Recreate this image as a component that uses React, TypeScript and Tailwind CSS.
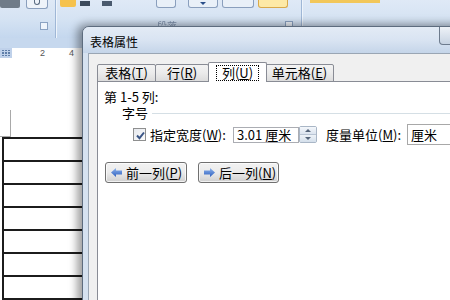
import type { ReactNode } from 'react'

function Accel({ label, k }: { label: string; k: string }) {
  return (
    <>
      {label}(<span className="underline underline-offset-[1px]">{k}</span>)
    </>
  )
}

function Tab({ children, width, active }: { children: ReactNode; width: string; active?: boolean }) {
  if (active) {
    return (
      <div
        className={`${width} h-[20px] -mx-px flex items-center justify-center border-x border-t border-[#898c95] bg-white rounded-t-[2px] relative z-20`}
      >
        <span className="border border-dotted border-black px-[5px] leading-[12px] py-px">{children}</span>
      </div>
    )
  }
  return (
    <div
      className={`${width} h-[18px] flex items-center justify-center border-x border-t border-b border-[#898c95] bg-gradient-to-b from-[#f3f3f3] via-[#ebebeb] to-[#dcdcdc] rounded-t-[2px] -ml-px first:ml-0`}
    >
      <span className="leading-[14px]">{children}</span>
    </div>
  )
}

function Arrow({ dir }: { dir: 'left' | 'right' }) {
  return (
    <svg width="11" height="9" viewBox="0 0 11 9" className={dir === 'right' ? 'scale-x-[-1]' : ''}>
      <defs>
        <linearGradient id={`ag-${dir}`} x1="0" y1="0" x2="0" y2="1">
          <stop offset="0" stopColor="#8fb4ec" />
          <stop offset="1" stopColor="#2d5fbf" />
        </linearGradient>
      </defs>
      <polygon points="0,4.5 5,0 5,2.5 11,2.5 11,6.5 5,6.5 5,9" fill={`url(#ag-${dir})`} />
    </svg>
  )
}

function VButton({ children, icon, width }: { children: ReactNode; icon: 'left' | 'right'; width: string }) {
  return (
    <div
      className={`${width} h-[21px] flex items-center gap-[4px] pl-[5px] rounded-[3px] border border-[#707070] bg-gradient-to-b from-[#f2f2f2] via-[#ebebeb] to-[#cfcfcf] shadow-[inset_0_0_0_1px_rgba(255,255,255,0.7)]`}
    >
      <Arrow dir={icon} />
      <span className="leading-[14px]">{children}</span>
    </div>
  )
}

export default function App() {
  return (
    <div className="relative w-[450px] h-[300px] overflow-hidden bg-white text-[13px] text-black font-['Noto_Sans_CJK_SC','Noto_Sans',sans-serif]">
      {/* ribbon */}
      <div className="h-[48px] flex flex-col bg-[#c6d8ee]">
        <div className="h-[38px] flex bg-gradient-to-b from-[#dfe9f6] via-[#d5e3f3] to-[#c4d7ee]">
          <div className="w-[56px] flex flex-col border-r border-[#9fb7d6]">
            <div className="h-[9px] flex gap-[6px]">
              <div className="w-[20px] h-[8px] bg-[#6f7b88] rounded-b-[2px]" />
              <div className="w-[22px] h-[9px] border-x border-b border-[#8a9fbd] rounded-b-[3px] bg-[#eef3f9] flex justify-center">
                <div className="w-[6px] h-[5px] border border-[#5a6b80] rounded-b-full border-t-0" />
              </div>
            </div>
            <div className="flex-1 flex items-start justify-end pt-[13px] pr-[7px]">
              <div className="w-[8px] h-[8px] border border-[#8aa2c2] bg-[#eef4fb]" />
            </div>
          </div>
          <div className="w-[246px] flex flex-col border-l border-r border-l-[#eef4fb] border-r-[#9fb7d6]">
            <div className="h-[9px] flex gap-[4px] pl-[3px]">
              <div className="w-[16px] h-[7px] bg-[#f5c24d] rounded-b-[2px]" />
              <div className="w-[10px] h-[5px] bg-[#3b4a5c] mt-[1px]" />
              <div className="w-[10px] h-[5px] bg-[#4a5a6e] mt-[1px] ml-[8px]" />
              <div className="w-[20px] h-[8px] border-x border-b border-[#8a9fbd] rounded-b-[3px] bg-[#e9f0f8] ml-[40px]" />
              <div className="w-[30px] h-[8px] border-x border-b border-[#8a9fbd] rounded-b-[3px] bg-[#e9f0f8] ml-[8px] flex justify-center items-center">
                <div className="w-0 h-0 border-x-[3px] border-x-transparent border-t-[3px] border-t-[#2a4f8a]" />
              </div>
              <div className="w-[32px] h-[8px] border-x border-b border-[#8a9fbd] rounded-b-[3px] bg-[#e9f0f8]" />
              <div className="w-[30px] h-[8px] border-x border-b border-[#d9a94a] rounded-b-[3px] bg-[#fde9a6]" />
            </div>
            <div className="flex-1 flex items-start justify-between pt-[12px] pl-[100px] pr-[8px]">
              <span className="text-[10px] leading-[10px] text-[#7d90ab] blur-[0.6px]">段落</span>
              <div className="w-[8px] h-[8px] border border-[#8aa2c2] bg-[#eef4fb]" />
            </div>
          </div>
          <div className="flex-1 flex flex-col border-l border-[#eef4fb] pl-[7px]">
            <div className="w-[70px] h-[3px] bg-[#f2c75a]" />
          </div>
        </div>
      </div>

      {/* ruler */}
      <div className="h-[10px] flex bg-[#cfdcee]">
        <div className="w-[12px] grid grid-cols-3 gap-px p-[2px] bg-[#bfd1ea]">
          {Array.from({ length: 9 }).map((_, i) => (
            <div key={i} className="bg-[#5f7ea8]" />
          ))}
        </div>
        <div className="w-[70px] bg-white flex items-center font-['Liberation_Sans',sans-serif] text-[9px] leading-[9px] text-[#555]">
          <span className="ml-[28px]">2</span>
          <span className="ml-[24px]">4</span>
        </div>
      </div>

      {/* page */}
      <div className="pt-[52px] flex flex-col">
        <div className="ml-[10px] w-px h-[26px] bg-[#a9a9a9]" />
        <div className="w-[11px] h-px bg-[#a9a9a9]" />
        <div className="ml-[2px] w-[90px] border-l-2 border-t-2 border-[#1c1c1c]">
          {Array.from({ length: 8 }).map((_, i) => (
            <div key={i} className="h-[23px] border-b-2 border-[#1c1c1c]" />
          ))}
        </div>
      </div>

      {/* dialog window */}
      <div className="absolute left-[82px] top-[26px] w-[409px] h-[300px] flex flex-col rounded-tl-[7px] border border-[#5d6c7e] bg-[#d6e2f0] shadow-[-3px_0_9px_2px_rgba(0,0,0,0.38)]">
        <div className="h-[26px] flex justify-between rounded-tl-[6px] bg-gradient-to-b from-[#e3ebf5] via-[#d9e4f2] to-[#c5d5e9]">
          <span className="pl-[7px] pt-[8px] text-[12px] leading-[14px]">表格属性</span>
          <div className="w-[44px] h-[18px] mr-[7px] rounded-b-[4px] border-x border-b border-[#6d7b8d] bg-gradient-to-b from-[#eef2f7] to-[#c7d3e2]" />
        </div>
        <div className="flex-1 ml-[5px] border-l border-t border-[#9aa6b4] bg-[#f0f0f0] pl-[8px] pt-[8px] flex flex-col">
          <div className="flex items-end -mb-px relative z-10">
            <Tab width="w-[59px]">
              <Accel label="表格" k="T" />
            </Tab>
            <Tab width="w-[54px]">
              <Accel label="行" k="R" />
            </Tab>
            <Tab width="w-[59px]" active>
              <Accel label="列" k="U" />
            </Tab>
            <Tab width="w-[69px]">
              <Accel label="单元格" k="E" />
            </Tab>
          </div>
          <div className="flex-1 border-l border-t border-[#898c95] bg-white pl-[6px] pt-[7px] flex flex-col">
            <div className="leading-[16px]">第 1-5 列:</div>
            <div className="flex items-center pl-[18px]">
              <span className="leading-[16px]">字号</span>
              <div className="flex-1 h-px ml-[4px] bg-[#d5dfe5]" />
            </div>
            <div className="mt-[3px] h-[21px] flex items-center">
              <div className="ml-[29px] w-[13px] h-[13px] border border-[#8e8f8f] bg-gradient-to-br from-[#e6e9ee] to-[#fbfbfb] p-px">
                <svg width="11" height="11" viewBox="0 0 11 11">
                  <path d="M2 5.5 L4.5 8.2 L9 2.5" fill="none" stroke="#3a5585" strokeWidth="2" />
                </svg>
              </div>
              <span className="ml-[4px] w-[83px] leading-[14px] whitespace-nowrap">
                <Accel label="指定宽度" k="W" />:
              </span>
              <div className="w-[66px] h-[16px] border border-[#abadb3] bg-white pl-[3px] flex items-center leading-[14px] whitespace-nowrap">
                3.01 厘米
              </div>
              <div className="w-[18px] h-[17px] flex flex-col border border-[#a9b6c6] rounded-[2px] bg-[#e9eff6]">
                <div className="flex-1 flex items-center justify-center border-b border-[#b9c5d4] bg-gradient-to-b from-[#f4f7fb] to-[#dbe4ef]">
                  <div className="w-0 h-0 border-x-[3px] border-x-transparent border-b-[3px] border-b-[#55657a]" />
                </div>
                <div className="flex-1 flex items-center justify-center bg-gradient-to-b from-[#eef3f8] to-[#d4dfeb]">
                  <div className="w-0 h-0 border-x-[3px] border-x-transparent border-t-[3px] border-t-[#55657a]" />
                </div>
              </div>
              <span className="ml-[9px] w-[81px] leading-[14px] whitespace-nowrap">
                <Accel label="度量单位" k="M" />:
              </span>
              <div className="flex-1 h-[21px] border border-[#a8a8a8] bg-white pl-[3px] flex items-center leading-[14px]">
                厘米
              </div>
            </div>
            <div className="mt-[17px] flex gap-[11px] pl-px">
              <VButton width="w-[82px]" icon="left">
                <Accel label="前一列" k="P" />
              </VButton>
              <VButton width="w-[81px]" icon="right">
                <Accel label="后一列" k="N" />
              </VButton>
            </div>
          </div>
        </div>
      </div>
    </div>
  )
}
